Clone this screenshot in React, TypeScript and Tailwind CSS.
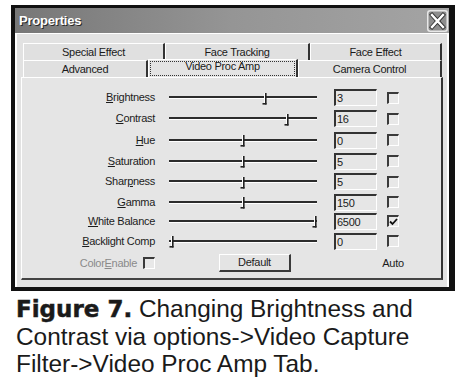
import React from "react";

const UI = { fontFamily: '"Liberation Sans", Arial, sans-serif' };

type Row = { label: string; u: number; val: string; pos: number; h: number; checked?: boolean };

const rows: Row[] = [
  { label: "Brightness", u: 0, val: "3", pos: 96, h: 21 },
  { label: "Contrast", u: 0, val: "16", pos: 118, h: 21 },
  { label: "Hue", u: 0, val: "0", pos: 74, h: 22 },
  { label: "Saturation", u: 0, val: "5", pos: 74, h: 20 },
  { label: "Sharpness", u: 4, val: "5", pos: 74, h: 21 },
  { label: "Gamma", u: 0, val: "150", pos: 74, h: 20 },
  { label: "White Balance", u: 0, val: "6500", pos: 146, h: 18, checked: true },
  { label: "Backlight Comp", u: 0, val: "0", pos: 3, h: 22 },
];

function Mnemonic({ text, u }: { text: string; u: number }) {
  return (
    <span>
      {text.slice(0, u)}
      <span className="underline underline-offset-[1px]">{text[u]}</span>
      {text.slice(u + 1)}
    </span>
  );
}

function Thumb({ pos }: { pos: number }) {
  return (
    <svg
      className="absolute top-1/2 -translate-y-[5px]"
      style={{ left: pos - 3 }}
      width="6"
      height="12"
      viewBox="0 0 6 12"
    >
      <rect x="2" y="0" width="1" height="10" fill="#ffffff" />
      <rect x="3" y="0" width="1.6" height="11.5" fill="#222" />
      <rect x="0.5" y="10" width="4" height="1.6" fill="#222" />
    </svg>
  );
}

function Checkbox({ checked }: { checked?: boolean }) {
  return (
    <div className="w-[12px] h-[12px] border-t-2 border-l-2 border-[#3a3a3a] border-r border-b border-r-white border-b-white bg-[#e8e8e8] flex items-center justify-center">
      {checked && (
        <svg width="9" height="8" viewBox="0 0 9 8">
          <path d="M1 3.5 L3.5 6 L8 1" stroke="#111" strokeWidth="1.8" fill="none" />
        </svg>
      )}
    </div>
  );
}

function Tab({ w, label, selected }: { w: number; label: string; selected?: boolean }) {
  if (selected) {
    return (
      <div
        className="relative h-[18px] -mt-[1px] -mb-[1px] z-10 bg-[#e4e4e4] border-t border-l border-white border-r-2 border-r-[#333] flex justify-center"
        style={{ width: w }}
      >
        <div className="absolute inset-[1px] border border-dotted border-[#333]" />
        <span className="text-[11px] tracking-[-0.3px] leading-[12px] text-[#1a1a1a]">{label}</span>
      </div>
    );
  }
  return (
    <div
      className="h-[17px] bg-[#e0e0e0] border-t border-l border-white border-r-2 border-r-[#333] flex items-center justify-center"
      style={{ width: w }}
    >
      <span className="text-[11px] tracking-[-0.3px] leading-[12px] text-[#1a1a1a]">{label}</span>
    </div>
  );
}

export default function App() {
  return (
    <div className="w-[460px] h-[384px] bg-white overflow-hidden" style={UI}>
      {/* Window */}
      <div className="ml-[11px] mt-[5px] w-[444px] h-[286px] bg-[#111] pt-[3px] pl-[4px] pr-[6px] pb-[4px] flex flex-col">
        {/* Title bar */}
        <div className="h-[25px] bg-gradient-to-r from-[#777777] via-[#959595] to-[#a4a4a4] flex items-center justify-between pl-[4px] pr-[1px]">
          <span className="text-white font-bold text-[13px] tracking-[-0.2px] [text-shadow:1px_1px_0_#2a2a2a]">
            Properties
          </span>
          <svg width="21" height="22" viewBox="0 0 21 22">
            <rect x="0.75" y="0.75" width="19.5" height="20.5" rx="2.5" fill="#8e8e8e" stroke="#e8e8e8" strokeWidth="1.5" />
            <path d="M5 5 L16 17 M16 5 L5 17" stroke="#333" strokeWidth="4.2" strokeLinecap="square" />
            <path d="M5 5 L16 17 M16 5 L5 17" stroke="#fff" strokeWidth="2.4" strokeLinecap="square" />
          </svg>
        </div>
        {/* Body */}
        <div className="flex-1 bg-[#e2e2e2] border-t border-l-2 border-r-2 border-white pl-[4px] pr-[4px] pt-[9px] flex flex-col">
          {/* Tabs */}
          <div className="ml-[2px] flex">
            <Tab w={142} label="Special Effect" />
            <Tab w={145} label="Face Tracking" />
            <Tab w={132} label="Face Effect" />
          </div>
          <div className="ml-[2px] flex items-start">
            <Tab w={125} label="Advanced" />
            <Tab w={150} label="Video Proc Amp" selected />
            <Tab w={144} label="Camera Control" />
          </div>
          {/* Panel */}
          <div className="w-[422px] h-[203px] bg-[#e5e5e5] border-t border-l border-white border-r-2 border-b-2 border-r-[#333] border-b-[#444] pt-[9px] flex flex-col text-[11px] tracking-[-0.3px] text-[#1c1c1c]">
            {rows.map((r) => (
              <div key={r.label} className="flex items-center" style={{ height: r.h }}>
                <div className="w-[133px] text-right shrink-0">
                  <Mnemonic text={r.label} u={r.u} />
                </div>
                <div className="relative w-[148px] h-full ml-[14px] flex items-center shrink-0">
                  <div className="w-full h-[3px] border-t-2 border-[#2c2c2c] border-b border-b-white" />
                  <Thumb pos={r.pos} />
                </div>
                <div className="ml-[17px] w-[43px] h-[17px] border-t-2 border-l-2 border-[#333] border-r border-b border-r-white border-b-white bg-[#e6e6e6] pl-[1px] leading-[14px] shrink-0">
                  {r.val}
                </div>
                <div className="ml-[10px]">
                  <Checkbox checked={r.checked} />
                </div>
              </div>
            ))}
            <div className="flex items-center h-[22px]">
              <div className="w-[133px] flex justify-end items-center gap-[6px] shrink-0 text-[#8a8a8a]">
                <span>
                  Color<span className="underline underline-offset-[1px]">E</span>nable
                </span>
                <Checkbox />
              </div>
              <div className="w-[148px] ml-[14px] flex shrink-0">
                <div className="ml-[50px] w-[72px] h-[18px] bg-[#e4e4e4] border-t border-l border-white border-r-2 border-b-2 border-r-[#3a3a3a] border-b-[#3a3a3a] flex items-center justify-center text-[#1c1c1c]">
                  Default
                </div>
              </div>
              <div className="ml-[17px] w-[43px] shrink-0" />
              <div className="ml-[10px] w-[12px] flex justify-center">
                <span className="whitespace-nowrap">Auto</span>
              </div>
            </div>
          </div>
        </div>
      </div>
      {/* Caption */}
      <div className="ml-[16px] mt-[4px] text-[24.4px] leading-[27px] text-[#1a1a1a] whitespace-nowrap">
        <span
          className="font-bold text-[23px] [-webkit-text-stroke:0.5px_#1a1a1a]"
          style={{ fontFamily: '"DejaVu Sans", sans-serif' }}
        >
          Figure 7.
        </span>{" "}
        Changing Brightness and
        <br />
        Contrast via options-&gt;Video Capture
        <br />
        Filter-&gt;Video Proc Amp Tab.
      </div>
    </div>
  );
}
